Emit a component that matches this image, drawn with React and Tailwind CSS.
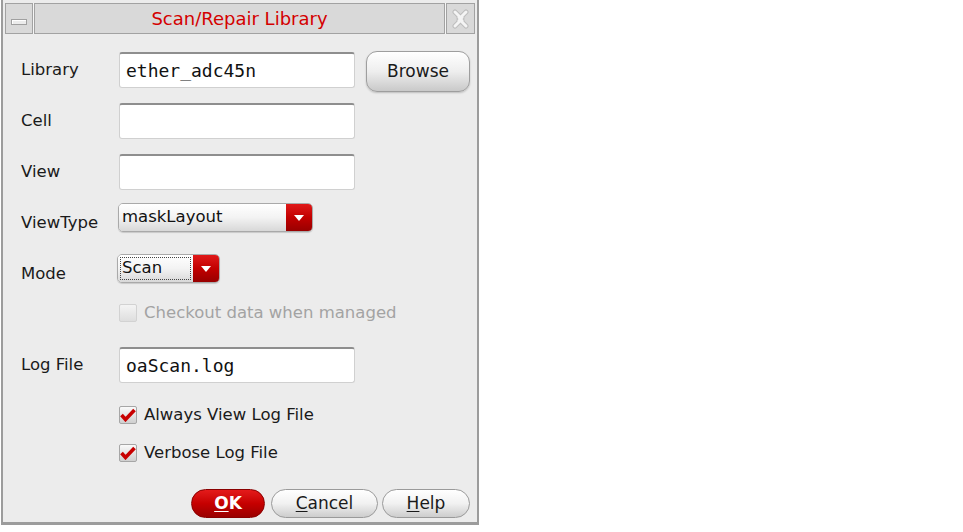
import React from 'react';

const SANS = { fontFamily: '"DejaVu Sans", "Liberation Sans", sans-serif' };
const MONO = { fontFamily: '"DejaVu Sans Mono", "Liberation Mono", monospace' };

function TextField({ value = '' }) {
  return (
    <div
      className="w-[236px] h-[36px] bg-white rounded-[3px] border border-[#d0d0d0] border-t-2 border-t-[#8e8e8e] flex items-center pl-[6px] text-[18px] text-[#111]"
      style={MONO}
    >
      {value}
    </div>
  );
}

function Arrow() {
  return (
    <svg width="10" height="6" viewBox="0 0 10 6">
      <path d="M0 0 H10 L5 6 Z" fill="#fff" />
    </svg>
  );
}

function Combo({ width, value, focused }) {
  return (
    <div
      className="h-[29px] flex rounded-[5px] border border-[#a9a9a9] shadow-[0_1px_1px_rgba(0,0,0,0.15)] overflow-hidden"
      style={{ width }}
    >
      <div className="flex-1 bg-gradient-to-b from-[#ffffff] via-[#f3f3f3] to-[#d8d8d8] flex items-center pl-[2px] pr-[2px]">
        <div
          className={`h-[23px] flex-1 flex items-center pl-[1px] text-[16.5px] text-[#111] ${
            focused ? 'border border-dotted border-[#444]' : ''
          }`}
        >
          {value}
        </div>
      </div>
      <div className="w-[26px] bg-gradient-to-b from-[#e01818] via-[#c20000] to-[#980000] flex items-center justify-center">
        <Arrow />
      </div>
    </div>
  );
}

function CheckBox({ checked, disabled }) {
  return (
    <div
      className={`w-[18px] h-[18px] rounded-[2px] border flex items-center justify-center ${
        disabled
          ? 'border-[#d2d2d2] bg-gradient-to-b from-[#f4f4f4] to-[#dedede]'
          : 'border-[#a6a6a6] bg-gradient-to-b from-[#fafafa] to-[#cfcfcf]'
      }`}
    >
      {checked && (
        <svg width="16" height="14" viewBox="0 0 16 14">
          <path d="M1.5 7 L5.5 11.5 L14.5 2" stroke="#c80000" strokeWidth="3.6" fill="none" strokeLinejoin="miter" />
        </svg>
      )}
    </div>
  );
}

function Row({ label, children, className = '', labelClass = '' }) {
  return (
    <div className={`flex items-center ${className}`}>
      <div className={`w-[98px] text-[16.5px] text-[#1a1a1a] ${labelClass}`}>{label}</div>
      {children}
    </div>
  );
}

function CheckRow({ label, checked, disabled, className = '' }) {
  return (
    <div className={`flex items-center pl-[98px] ${className}`}>
      <CheckBox checked={checked} disabled={disabled} />
      <span className={`ml-[7px] text-[16.5px] ${disabled ? 'text-[#a3a3a3]' : 'text-[#1a1a1a]'}`}>{label}</span>
    </div>
  );
}

function PillButton({ width, children, primary }) {
  return (
    <div
      className={`h-[29px] rounded-full flex items-center justify-center text-[17px] ${
        primary
          ? 'bg-gradient-to-b from-[#e41a1a] via-[#c60000] to-[#9a0000] text-white font-bold border border-[#8a0000]'
          : 'bg-gradient-to-b from-[#ffffff] via-[#f1f1f1] to-[#cdcdcd] text-[#1a1a1a] border border-[#9a9a9a]'
      }`}
      style={{ width }}
    >
      {children}
    </div>
  );
}

const CLOSE_D =
  'M4 3 L8 7 L8 8.5 L9.5 10 L8 11.5 L8 13 L4 17 M15 3 L11 7 L11 8.5 L9.5 10 L11 11.5 L11 13 L15 17';

export default function App() {
  return (
    <div className="w-[963px] h-[532px] bg-white" style={SANS}>
      <div className="ml-px w-[478px] h-[525px] bg-[#ececec] border-l-2 border-r-2 border-b-[3px] border-[#9c9c9c] flex flex-col">
        {/* title bar */}
        <div className="mt-[3px] mx-[2px] h-[31px] flex gap-px bg-[#f6f6f6]">
          <div className="w-[28px] bg-[#d9d9d9] border border-[#a2a2a2] flex items-center justify-center">
            <div className="mt-[6px] w-[16px] h-[6px] bg-[#ececec] border border-[#a0a0a0] shadow-[inset_1px_1px_0_#fff]" />
          </div>
          <div className="flex-1 bg-[#d9d9d9] border border-[#a2a2a2] flex items-center justify-center text-[18px] text-[#d40000]">
            Scan/Repair Library
          </div>
          <div className="w-[29px] bg-[#d9d9d9] border border-[#a2a2a2] flex items-center justify-center">
            <svg width="19" height="20" viewBox="0 0 19 20">
              <path d={CLOSE_D} stroke="#bdbdbd" strokeWidth="5" fill="none" strokeLinecap="round" />
              <path d={CLOSE_D} stroke="#f4f4f4" strokeWidth="3" fill="none" strokeLinecap="round" />
            </svg>
          </div>
        </div>

        {/* body */}
        <div className="flex flex-col pl-[18px]">
          <Row label="Library" className="mt-[18px] h-[36px]">
            <TextField value="ether_adc45n" />
            <div className="ml-[11px] mt-[3px] w-[104px] h-[41px] rounded-[11px] border border-[#9e9e9e] bg-gradient-to-b from-[#ffffff] via-[#eeeeee] to-[#c9c9c9] shadow-[0_1px_2px_rgba(0,0,0,0.2)] flex items-center justify-center text-[17px] text-[#1a1a1a]">
              Browse
            </div>
          </Row>
          <Row label="Cell" className="mt-[15px] h-[36px]">
            <TextField />
          </Row>
          <Row label="View" className="mt-[15px] h-[36px]">
            <TextField />
          </Row>
          <Row label="ViewType" className="mt-[13px] h-[29px]" labelClass="mt-[11px]">
            <div className="-ml-px">
              <Combo width={195} value="maskLayout" />
            </div>
          </Row>
          <Row label="Mode" className="mt-[22px] h-[29px]" labelClass="mt-[11px]">
            <div className="-ml-[2px]">
              <Combo width={103} value="Scan" focused />
            </div>
          </Row>
          <CheckRow label="Checkout data when managed" disabled className="mt-[21px] h-[18px]" />
          <Row label="Log File" className="mt-[25px] h-[36px]">
            <TextField value="oaScan.log" />
          </Row>
          <CheckRow label="Always View Log File" checked className="mt-[23px] h-[18px]" />
          <CheckRow label="Verbose Log File" checked className="mt-[20px] h-[18px]" />
        </div>

        <div className="mt-[27px] flex justify-end pr-[7px]">
          <PillButton width={74} primary>
            <span className="underline underline-offset-2">O</span>K
          </PillButton>
          <div className="w-[6px]" />
          <PillButton width={107}>
            <span className="underline underline-offset-2">C</span>ancel
          </PillButton>
          <div className="w-[4px]" />
          <PillButton width={88}>
            <span className="underline underline-offset-2">H</span>elp
          </PillButton>
        </div>
      </div>
    </div>
  );
}
